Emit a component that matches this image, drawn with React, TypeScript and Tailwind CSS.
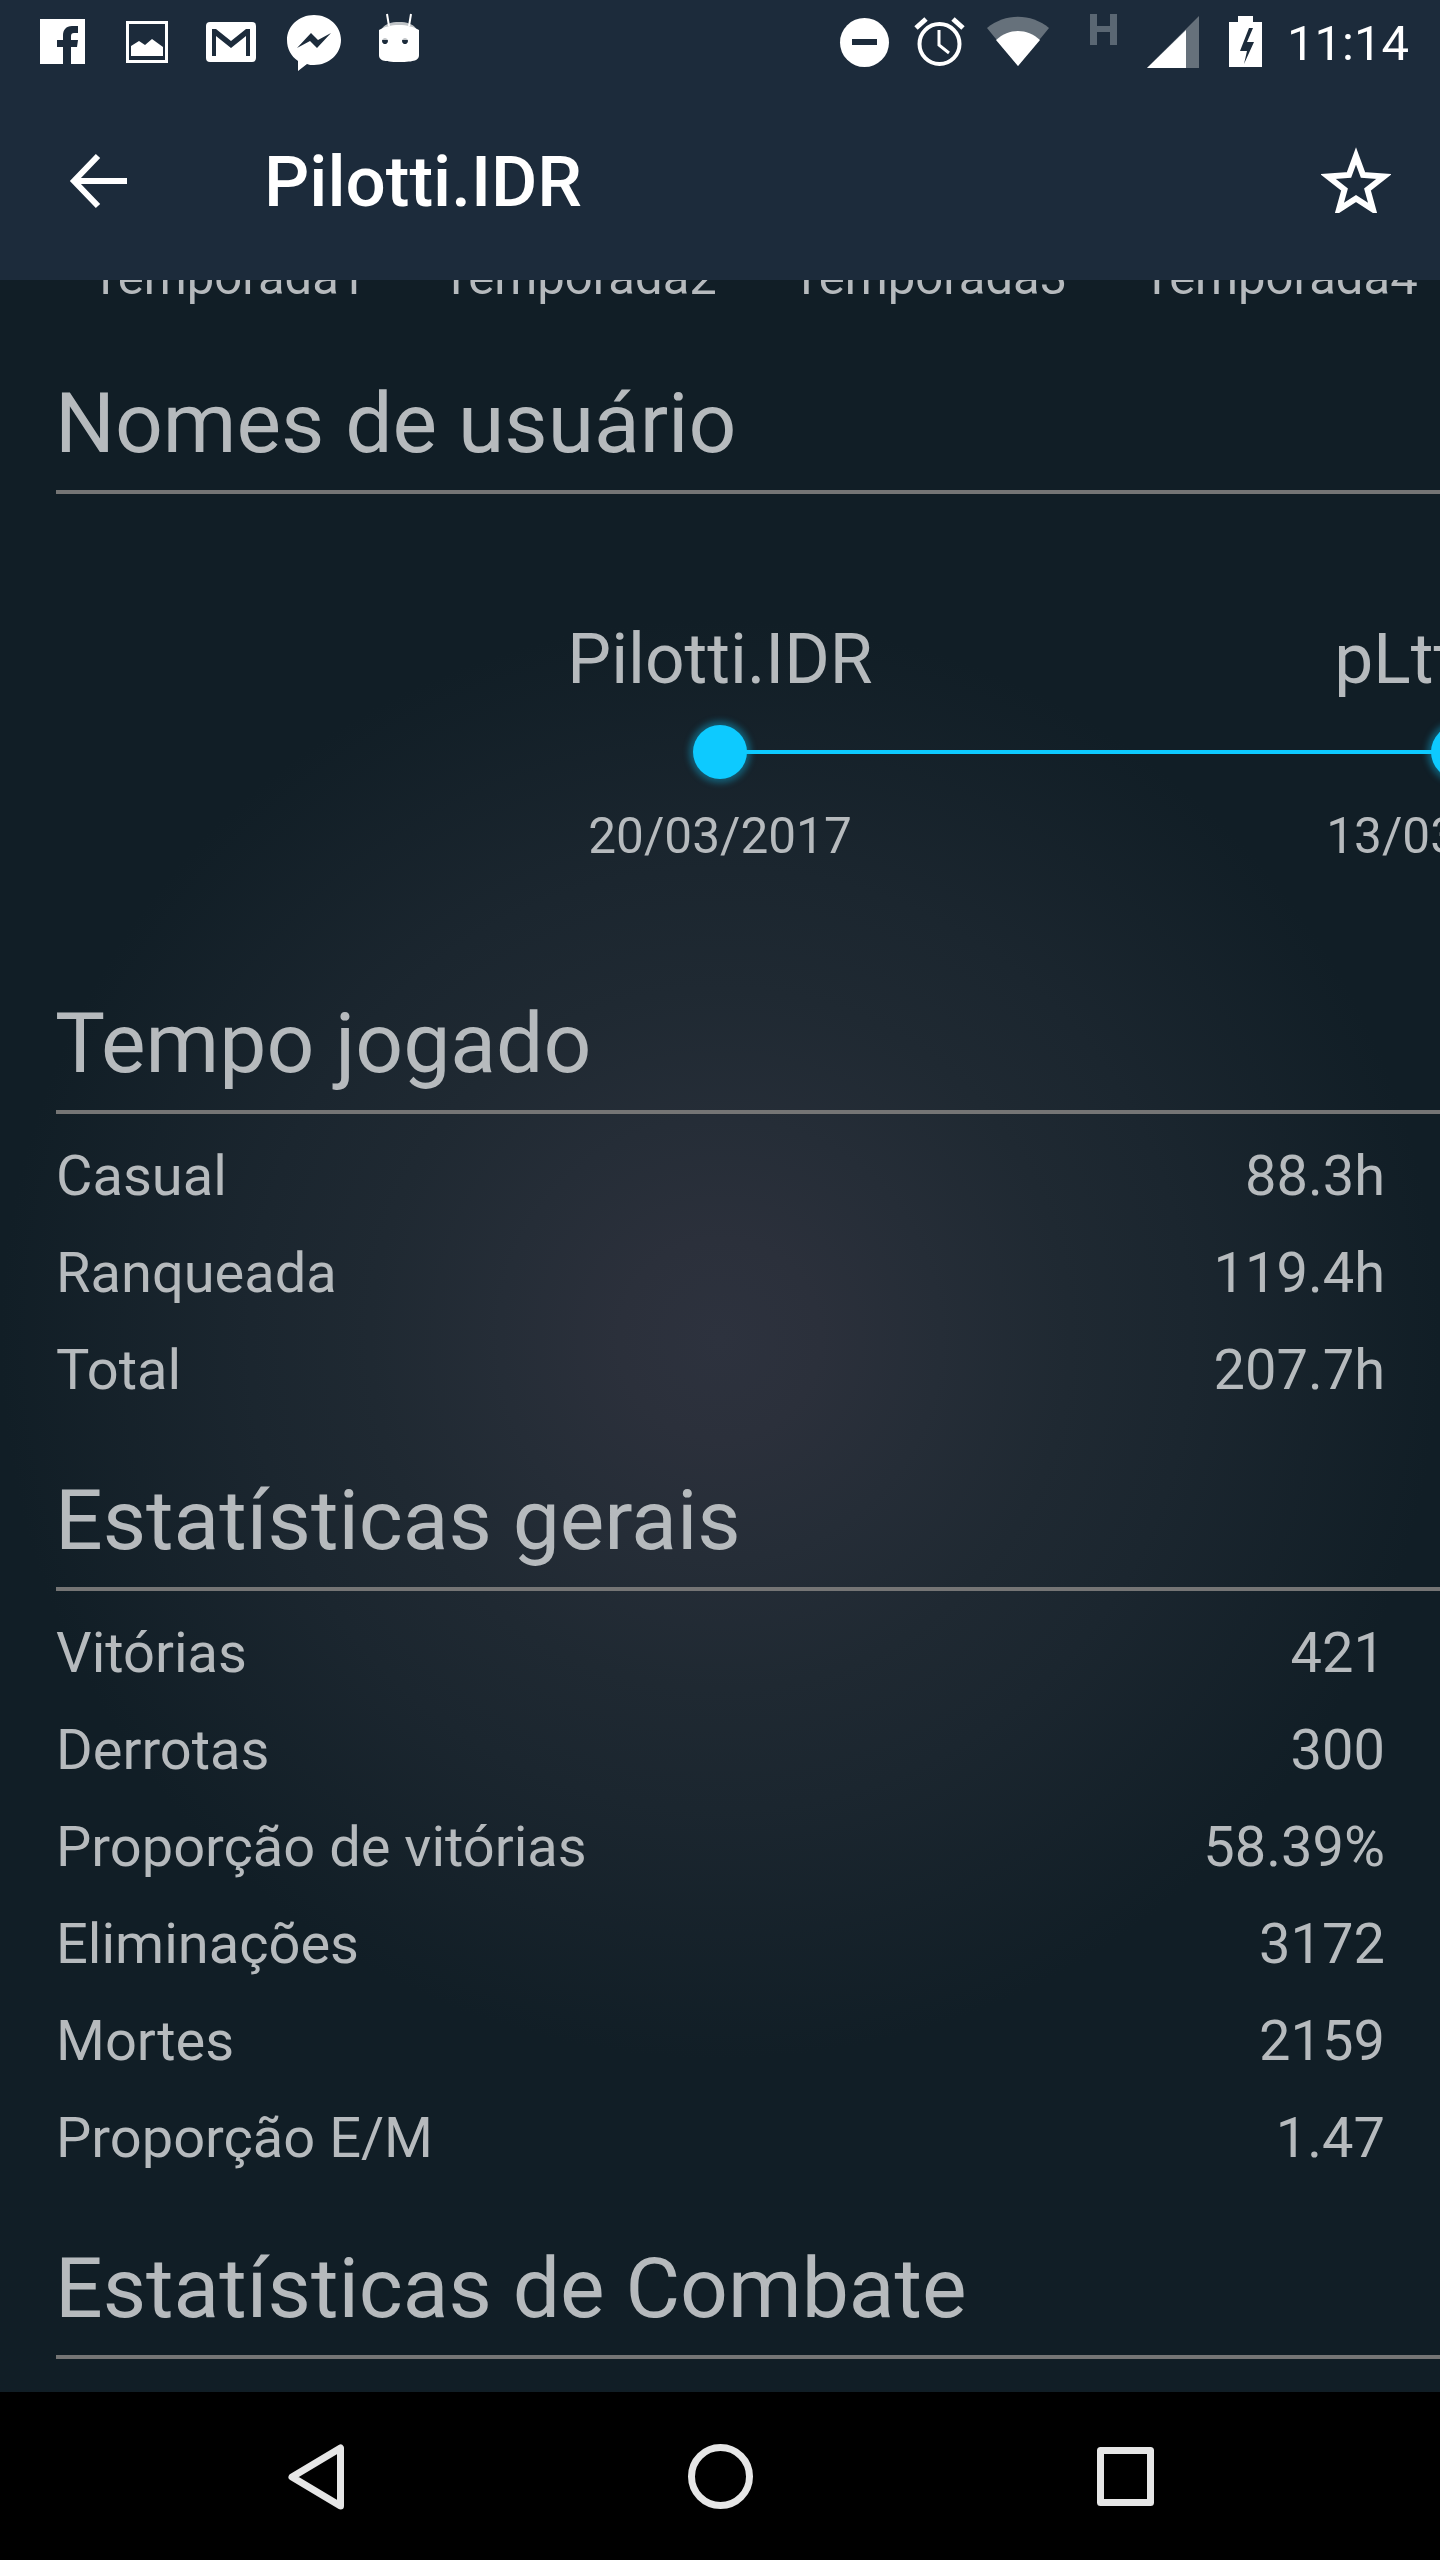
import React from 'react'

const stats = {
  tempo: [
    ['Casual', '88.3h'],
    ['Ranqueada', '119.4h'],
    ['Total', '207.7h'],
  ],
  gerais: [
    ['Vitórias', '421'],
    ['Derrotas', '300'],
    ['Proporção de vitórias', '58.39%'],
    ['Eliminações', '3172'],
    ['Mortes', '2159'],
    ['Proporção E/M', '1.47'],
  ],
}

const usernames = [
  { name: 'Pilotti.IDR', date: '20/03/2017', connector: true },
  { name: 'pLtt.IDR', date: '13/03/2017', connector: false },
]

function SectionTitle({ children, className }: { children: React.ReactNode; className: string }) {
  return (
    <div className={`ml-[56px] border-b-[4px] border-[#757575] h-[115px] ${className}`}>
      <h2 className="-ml-[1px] text-[84px] leading-[90px] text-[#b6babd] whitespace-nowrap">{children}</h2>
    </div>
  )
}

function StatRows({ rows }: { rows: string[][] }) {
  return (
    <div className="mt-[13px] pl-[56px] pr-[55px]">
      {rows.map(([label, value]) => (
        <div key={label} className="flex justify-between h-[97px] items-center text-[56px] text-[#b6babd]">
          <span>{label}</span>
          <span>{value}</span>
        </div>
      ))}
    </div>
  )
}

function StatusIcons() {
  return (
    <div className="relative h-[112px]">
      <svg className="absolute left-0 top-0" width="1440" height="112" viewBox="0 0 1440 112">
        <path fill="#fff" fillRule="evenodd" d="M40 19h45v45H71V47h6l1-7h-7v-4c0-2 1-3 3-3h4v-7h-6c-6 0-9 4-9 9v5h-6v7h6v17H40z" />
        <rect x="127.500" y="22.500" width="39" height="39" fill="none" stroke="#fff" strokeWidth="3" />
        <path fill="#fff" d="M131 56V46l8-5 6 4 7-6 11 8v9z" />
        <path fill="#fff" fillRule="evenodd" d="M210 22h42a4 4 0 0 1 4 4v32a4 4 0 0 1-4 4h-42a4 4 0 0 1-4-4V26a4 4 0 0 1 4-4zm2 7v27h4V36l15 12 15-12v20h4V29h-4l-15 12-15-12z" />
        <path fill="#fff" fillRule="evenodd" d="M314 15c15 0 27 11 27 25s-12 25-27 25c-3 0-5 0-7-1l-9 7v-10c-7-5-11-12-11-21 0-14 12-25 27-25zm-17 33 14-15 7 7 13-7-14 15-7-7z" />
        <path fill="#bfc3c6" d="M379 40c0-10 4-18 20-18s20 8 20 18z" />
        <path fill="#fff" fillRule="evenodd" d="M379 30c5-3 12-5 20-5s15 2 20 5v25c0 5-4 7-20 7s-20-2-20-7zm9 11a3 3 0 1 0 0 .100zm20 0a3 3 0 1 0 0 .100z" />
        <path stroke="#fff" strokeWidth="2" d="M387 14l2 12M411 14l-2 12" />
        <circle cx="864.500" cy="42.500" r="24.500" fill="#fff" />
        <rect x="852" y="39" width="25" height="6" fill="#1c2b3b" />
        <circle cx="939.500" cy="44" r="20" fill="none" stroke="#fff" strokeWidth="4" />
        <path d="M939 30v15l10 8" fill="none" stroke="#fff" strokeWidth="3" />
        <path d="M916 28l10-9M963 28l-10-9" stroke="#fff" strokeWidth="5" />
        <path fill="#66717b" d="M987 28c18-15 44-15 62 0l-31 38z" />
        <path fill="#fff" d="M996 40c13-12 31-12 44 0l-22 26z" />
        <path fill="#5a6773" d="M1090 14h7v12h13V14h7v31h-7V32h-13v13h-7z" />
        <path fill="#66717b" d="M1199 16v52h-52z" />
        <path fill="#fff" d="M1186 68h-39l39-38z" />
        <path fill="#fff" fillRule="evenodd" d="M1238 22v-6h15v6h9v45h-33V22zm11 6-9 23h7l-3 13 10-22h-7l6-14z" />
      </svg>
      <span className="absolute left-[1287px] top-[16px] text-[49px] leading-[56px] text-white">11:14</span>
    </div>
  )
}

export default function App() {
  return (
    <div className="w-[1440px] h-[2560px] flex flex-col bg-black overflow-hidden font-['Roboto',sans-serif]">
      <header className="h-[280px] shrink-0 bg-[#1c2b3b] z-10">
        <StatusIcons />
        <div className="h-[168px] flex items-center pb-[30px]">
          <svg className="ml-[69px]" width="60" height="60" viewBox="0 0 60 60" fill="none" stroke="#fff" strokeWidth="6">
            <path d="M58 30H5M29 5 5 30l24 25" />
          </svg>
          <h1 className="ml-[135px] mt-[2px] text-[71px] leading-[80px] font-medium text-white">Pilotti.IDR</h1>
          <svg className="ml-auto mr-[49px] -mt-[5px]" width="70" height="68" viewBox="0 0 70 68" fill="none" stroke="#fff" strokeWidth="6">
            <path d="M35 11l7 19 21 1.500-16.500 13 5.500 20-17-11-17 11 5.500-20-16.500-13 21-1.500z" />
          </svg>
        </div>
      </header>

      <main className="flex-1 min-h-0 overflow-hidden bg-[radial-gradient(circle_at_720px_1059px,#2d323e_0%,#2b303b_100px,#252d37_220px,#1f2932_350px,#1b262f_470px,#111e26_720px)]">
        <div className="flex -mt-[32px] h-[60px] pl-[91px] gap-[75px] text-[49px] leading-[60px] text-[#b6babd] whitespace-nowrap">
          <span>Temporada1</span>
          <span>Temporada2</span>
          <span>Temporada3</span>
          <span>Temporada4</span>
        </div>

        <SectionTitle className="mt-[71px]">Nomes de usuário</SectionTitle>

        <div className="mt-[126px] flex pl-[351px] text-[#b6babd] whitespace-nowrap">
          {usernames.map(u => (
            <div key={u.name} className="w-[738px] shrink-0 flex flex-col items-center">
              <span className="text-[69.5px] leading-[80px]">{u.name}</span>
              <div className="relative mt-[25px] w-full h-[54px] flex justify-center">
                {u.connector && <span className="absolute left-1/2 top-[25px] w-[738px] h-[4px] bg-[#0dcaff]" />}
                <span className="relative w-[54px] h-[54px] rounded-full bg-[#0dcaff] shadow-[0_0_6px_4px_rgba(13,202,255,0.35)]" />
              </div>
              <span className="mt-[27px] text-[49.5px] leading-[60px]">{u.date}</span>
            </div>
          ))}
        </div>

        <SectionTitle className="mt-[133px]">Tempo jogado</SectionTitle>
        <StatRows rows={stats.tempo} />

        <SectionTitle className="mt-[58px]">Estatísticas gerais</SectionTitle>
        <StatRows rows={stats.gerais} />

        <SectionTitle className="mt-[58px]">Estatísticas de Combate</SectionTitle>
      </main>

      <nav className="h-[168px] shrink-0 bg-black flex items-center justify-center">
        <svg width="1040" height="70" viewBox="0 0 1040 70" fill="none" stroke="#e6e6e6" strokeWidth="7" strokeLinejoin="round">
          <path d="M140.500 7v58L92 36z" />
          <ellipse cx="520.500" cy="35.500" rx="29" ry="29" />
          <rect x="900.500" y="9.500" width="50" height="52" />
        </svg>
      </nav>
    </div>
  )
}
